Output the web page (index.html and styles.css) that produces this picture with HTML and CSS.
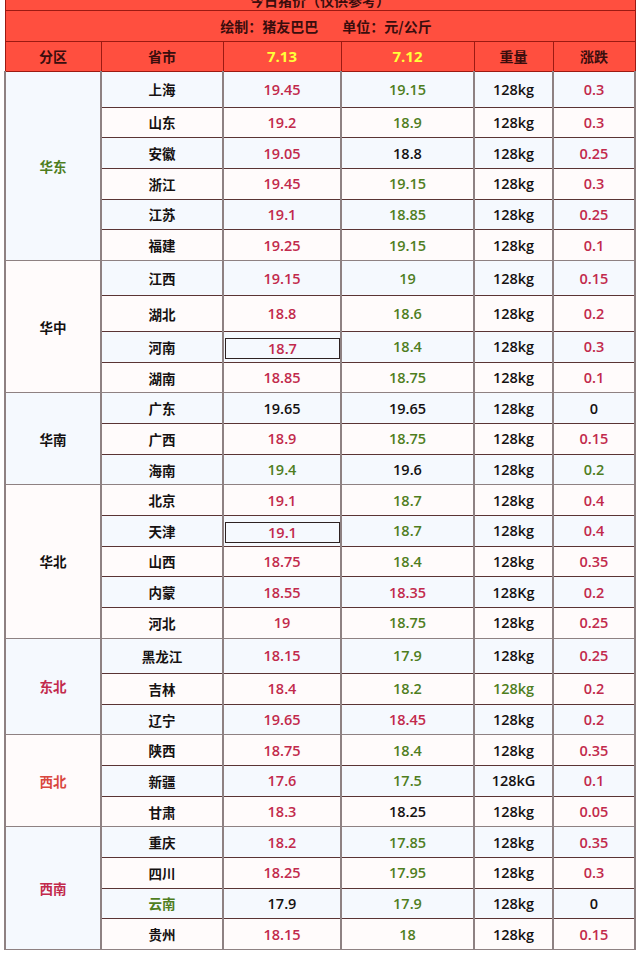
FILE: index.html
```html
<!DOCTYPE html>
<html lang="zh-CN">
<head>
<meta charset="utf-8">
<title>猪价</title>
<link rel="stylesheet" href="styles.css">
</head>
<body>
<table class="price">
  <colgroup>
    <col class="c-region"><col class="c-prov"><col class="c-d1"><col class="c-d2"><col class="c-w"><col class="c-chg">
  </colgroup>
  <thead>
    <tr class="title"><th colspan="6"><div class="title-clip"><span>今日猪价（仅供参考）</span></div></th></tr>
    <tr class="sub"><th colspan="6">绘制：猪友巴巴<span class="gap"></span>单位：元/公斤</th></tr>
    <tr class="cols"><th>分区</th><th>省市</th><th class="date">7.13</th><th class="date">7.12</th><th>重量</th><th>涨跌</th></tr>
  </thead>
  <tbody>
    <tr class="tall a"><td class="region g" rowspan="6">华东</td><td class="prov">上海</td><td class="r">19.45</td><td class="g">19.15</td><td class="k">128kg</td><td class="r">0.3</td></tr>
    <tr class="b"><td class="prov">山东</td><td class="r">19.2</td><td class="g">18.9</td><td class="k">128kg</td><td class="r">0.3</td></tr>
    <tr class="a"><td class="prov">安徽</td><td class="r">19.05</td><td class="k">18.8</td><td class="k">128kg</td><td class="r">0.25</td></tr>
    <tr class="b"><td class="prov">浙江</td><td class="r">19.45</td><td class="g">19.15</td><td class="k">128kg</td><td class="r">0.3</td></tr>
    <tr class="a"><td class="prov">江苏</td><td class="r">19.1</td><td class="g">18.85</td><td class="k">128kg</td><td class="r">0.25</td></tr>
    <tr class="b end"><td class="prov">福建</td><td class="r">19.25</td><td class="g">19.15</td><td class="k">128kg</td><td class="r">0.1</td></tr>

    <tr class="tall a"><td class="region k alt" rowspan="4">华中</td><td class="prov">江西</td><td class="r">19.15</td><td class="g">19</td><td class="k">128kg</td><td class="r">0.15</td></tr>
    <tr class="tall b"><td class="prov">湖北</td><td class="r">18.8</td><td class="g">18.6</td><td class="k">128kg</td><td class="r">0.2</td></tr>
    <tr class="a"><td class="prov">河南</td><td class="r boxed"><div class="box">18.7</div></td><td class="g">18.4</td><td class="k">128kg</td><td class="r">0.3</td></tr>
    <tr class="b end"><td class="prov">湖南</td><td class="r">18.85</td><td class="g">18.75</td><td class="k">128kg</td><td class="r">0.1</td></tr>

    <tr class="a"><td class="region k" rowspan="3">华南</td><td class="prov">广东</td><td class="k">19.65</td><td class="k">19.65</td><td class="k">128kg</td><td class="k">0</td></tr>
    <tr class="b"><td class="prov">广西</td><td class="r">18.9</td><td class="g">18.75</td><td class="k">128kg</td><td class="r">0.15</td></tr>
    <tr class="a end"><td class="prov">海南</td><td class="g">19.4</td><td class="k">19.6</td><td class="k">128kg</td><td class="g">0.2</td></tr>

    <tr class="b"><td class="region k alt" rowspan="5">华北</td><td class="prov">北京</td><td class="r">19.1</td><td class="g">18.7</td><td class="k">128kg</td><td class="r">0.4</td></tr>
    <tr class="a"><td class="prov">天津</td><td class="r boxed"><div class="box">19.1</div></td><td class="g">18.7</td><td class="k">128kg</td><td class="r">0.4</td></tr>
    <tr class="b"><td class="prov">山西</td><td class="r">18.75</td><td class="g">18.4</td><td class="k">128kg</td><td class="r">0.35</td></tr>
    <tr class="a"><td class="prov">内蒙</td><td class="r">18.55</td><td class="r">18.35</td><td class="k">128Kg</td><td class="r">0.2</td></tr>
    <tr class="b end"><td class="prov">河北</td><td class="r">19</td><td class="g">18.75</td><td class="k">128kg</td><td class="r">0.25</td></tr>

    <tr class="tall a"><td class="region r" rowspan="3">东北</td><td class="prov">黑龙江</td><td class="r">18.15</td><td class="g">17.9</td><td class="k">128kg</td><td class="r">0.25</td></tr>
    <tr class="b"><td class="prov">吉林</td><td class="r">18.4</td><td class="g">18.2</td><td class="g">128kg</td><td class="r">0.2</td></tr>
    <tr class="a end"><td class="prov">辽宁</td><td class="r">19.65</td><td class="r">18.45</td><td class="k">128kg</td><td class="r">0.2</td></tr>

    <tr class="b"><td class="region lr alt" rowspan="3">西北</td><td class="prov">陕西</td><td class="r">18.75</td><td class="g">18.4</td><td class="k">128kg</td><td class="r">0.35</td></tr>
    <tr class="a"><td class="prov">新疆</td><td class="r">17.6</td><td class="g">17.5</td><td class="k">128kG</td><td class="r">0.1</td></tr>
    <tr class="b end"><td class="prov">甘肃</td><td class="r">18.3</td><td class="k">18.25</td><td class="k">128kg</td><td class="r">0.05</td></tr>

    <tr class="a"><td class="region r" rowspan="4">西南</td><td class="prov">重庆</td><td class="r">18.2</td><td class="g">17.85</td><td class="k">128kg</td><td class="r">0.35</td></tr>
    <tr class="b"><td class="prov">四川</td><td class="r">18.25</td><td class="g">17.95</td><td class="k">128kg</td><td class="r">0.3</td></tr>
    <tr class="a"><td class="prov g">云南</td><td class="k">17.9</td><td class="g">17.9</td><td class="k">128kg</td><td class="k">0</td></tr>
    <tr class="b end"><td class="prov">贵州</td><td class="r">18.15</td><td class="g">18</td><td class="k">128kg</td><td class="r">0.15</td></tr>
  </tbody>
</table>
</body>
</html>
```
FILE: styles.css
```css
html, body {
  margin: 0;
  padding: 0;
  background: #ffffff;
}

.price {
  margin-left: 4px;
  width: 630px;
  border-collapse: collapse;
  table-layout: fixed;
  font-family: "Open Sans", "Noto Sans CJK SC", sans-serif;
}

.c-region { width: 96px; }
.c-prov { width: 122px; }
.c-d1 { width: 118px; }
.c-d2 { width: 133px; }
.c-w { width: 79px; }
.c-chg { width: 82px; }

/* header */
.price thead th {
  background: #ff4f3f;
  border: 1px solid #9c1a12;
  padding: 0;
  color: #3a0d0d;
  font-family: "Noto Sans CJK SC", sans-serif;
  font-weight: 700;
  font-size: 14px;
  text-align: center;
  vertical-align: middle;
}

.price tr.title th {
  height: 10px;
  border-top: none;
}

.title-clip {
  height: 10px;
  overflow: hidden;
}

.title-clip span {
  display: block;
  margin-top: -10px;
  line-height: 20px;
  font-size: 14px;
}

.price tr.sub th {
  height: 29.5px;
  padding-left: 12px;
}

.gap {
  display: inline-block;
  width: 24px;
}

.price tr.cols th {
  height: 29.5px;
  font-size: 14px;
}

.price tr.cols th.date {
  color: #ffff3a;
  font-family: "Open Sans", sans-serif;
  font-size: 15px;
}

/* body */
.price tbody td {
  height: 29.65px;
  padding: 0;
  text-align: center;
  vertical-align: middle;
  font-size: 14.5px;
  font-weight: 600;
  border-left: 2px solid #8e8182;
  border-right: 2px solid #8e8182;
  border-bottom: 1px solid #5a3434;
}

.price tbody tr.tall td {
  height: 34.65px;
}

.price tbody tr.a td { background: #f5f9fe; }
.price tbody tr.b td { background: #fffbfb; }

.price tbody tr.end td {
  border-bottom: 1px solid #8e8182;
}

.price tbody td.region {
  background: #f5f9fe;
  border-bottom: 1px solid #8e8182;
  font-family: "Noto Sans CJK SC", sans-serif;
  font-size: 13.5px;
  font-weight: 700;
}

.price tbody td.region.alt {
  background: #fffbfb;
}

.price tbody td.prov {
  font-family: "Noto Sans CJK SC", sans-serif;
  font-size: 13.5px;
  font-weight: 700;
  color: #161212;
}

.price tbody td.r { color: #c22a4c; }
.price tbody td.g { color: #4f7e1e; }
.price tbody td.k { color: #141111; }
.price tbody td.lr { color: #d9473f; }

.price tbody td.boxed {
  padding: 0 0 0 1px;
}

.box {
  border: 1px solid #2e2222;
  height: 19px;
  line-height: 19px;
  margin: 5px 0 2px;
}
```
